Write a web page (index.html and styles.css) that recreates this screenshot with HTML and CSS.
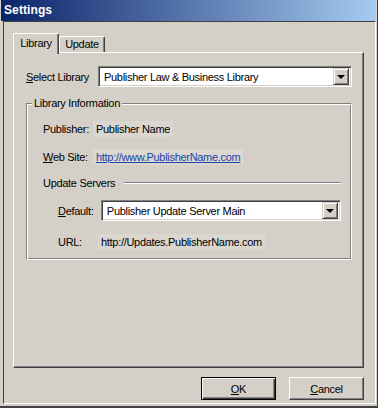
FILE: index.html
```html
<!DOCTYPE html>
<html lang="en">
<head>
  <meta charset="UTF-8" />
  <title>Settings</title>
  <link rel="stylesheet" href="styles.css">
</head>
<body>
  <div class="window">
    <div class="titlebar">Settings</div>
    <div class="client">
      <div class="tabs">
        <div class="tab active">Library</div>
        <div class="tab">Update</div>
      </div>

      <div class="panel">
        <div class="field-row">
          <label class="field-label"><u>S</u>elect Library</label>
          <div class="combo combo-wide">
            <span class="combo-text">Publisher Law &amp; Business Library</span>
            <span class="combo-btn"><span class="arrow"></span></span>
          </div>
        </div>

        <div class="group">
          <div class="legend">Library Information</div>

          <div class="info-row row-publisher">
            <span class="info-label">Publisher:</span>
            <span class="info-value">Publisher Name</span>
          </div>

          <div class="info-row row-web">
            <span class="info-label"><u>W</u>eb Site:</span>
            <span class="info-value"><a href="#">http://www.PublisherName.com</a></span>
          </div>

          <div class="info-row row-servers">
            <span>Update Servers</span>
            <span class="separator"></span>
          </div>

          <div class="info-row sub row-default">
            <span class="sub-label"><u>D</u>efault:</span>
            <div class="combo combo-server">
              <span class="combo-text">Publisher Update Server Main</span>
              <span class="combo-btn"><span class="arrow"></span></span>
            </div>
          </div>

          <div class="info-row sub row-url">
            <span class="sub-label">URL:</span>
            <span class="info-value">http://Updates.PublisherName.com</span>
          </div>
        </div>
      </div>

      <div class="buttons">
        <button class="btn default"><u>O</u>K</button>
        <button class="btn"><u>C</u>ancel</button>
      </div>
    </div>
  </div>
</body>
</html>
```

FILE: styles.css
```css
/* Classic Windows settings dialog */
* {
  box-sizing: border-box;
}

body {
  margin: 0;
  width: 378px;
  height: 408px;
  overflow: hidden;
  background: #d4d0c8;
  font-family: "Liberation Sans", Arial, sans-serif;
  font-size: 11px;
  letter-spacing: -0.3px;
  color: #000;
}

.window {
  display: flex;
  flex-direction: column;
  width: 378px;
  height: 408px;
  padding: 0 1px 2px 1px;
  border-right: 1px solid #404040;
  border-bottom: 2px solid #404040;
}

.titlebar {
  height: 21px;
  line-height: 20px;
  padding-left: 3px;
  background: linear-gradient(to right, #0a246a, #a6caf0);
  color: #fff;
  font-weight: bold;
  font-size: 12px;
  letter-spacing: 0.1px;
}

.client {
  flex: 1;
  display: flex;
  flex-direction: column;
  margin-left: 2px;
  border: 1px solid;
  border-color: #404040 #fff #fff #404040;
  padding: 11px 11px 3px 9px;
}

/* tabs */
.tabs {
  display: flex;
  align-items: flex-end;
  height: 19px;
  position: relative;
  z-index: 1;
}

.tab {
  width: 46px;
  height: 16px;
  line-height: 15px;
  text-align: center;
  border: 1px solid;
  border-color: #fff #404040 transparent #fff;
  border-bottom: none;
  border-radius: 2px 2px 0 0;
  box-shadow: inset -1px 0 #808080;
  background: #d4d0c8;
}

.tab.active {
  height: 21px;
  line-height: 19px;
  margin-bottom: -2px;
}

/* tab page */
.panel {
  height: 316px;
  border: 1px solid;
  border-color: #fff #404040 #404040 #fff;
  box-shadow: inset -1px -1px #808080;
  padding: 13px 0 0 12px;
}

.field-row {
  display: flex;
  align-items: center;
}

.field-label {
  width: 72px;
}

u {
  text-decoration: underline;
  text-underline-offset: 1px;
}

/* combo boxes */
.combo {
  display: flex;
  align-items: center;
  height: 21px;
  background: #fff;
  border: 1px solid;
  border-color: #808080 #fff #fff #808080;
  box-shadow: inset 1px 1px #404040, inset -1px -1px #d4d0c8;
  padding: 2px 2px 2px 5px;
}

.combo-wide {
  width: 254px;
}

.combo-server {
  width: 241px;
}

.combo-text {
  flex: 1;
  white-space: nowrap;
}

.combo-btn {
  display: flex;
  align-items: center;
  justify-content: center;
  width: 16px;
  height: 17px;
  background: #d4d0c8;
  border: 1px solid;
  border-color: #d4d0c8 #404040 #404040 #d4d0c8;
  box-shadow: inset 1px 1px #fff, inset -1px -1px #808080;
}

.arrow {
  width: 0;
  height: 0;
  border-left: 4px solid transparent;
  border-right: 4px solid transparent;
  border-top: 4px solid #000;
  margin-top: 1px;
}

/* group box */
.group {
  width: 326px;
  height: 157px;
  margin-top: 16px;
  border: 1px solid;
  border-color: #808080 #fff #fff #808080;
  box-shadow: inset 1px 1px #fff, inset -1px -1px #808080;
  padding: 0 10px 0 16px;
}

.legend {
  display: table;
  margin: -7px 0 0 -11px;
  padding: 0 2px;
  line-height: 13px;
  background: #d4d0c8;
}

.info-row {
  display: flex;
  align-items: center;
  height: 20px;
}

.row-publisher {
  margin-top: 9px;
}

.row-web {
  margin-top: 8px;
}

.row-servers {
  margin-top: 6px;
}

.row-default {
  height: 21px;
  margin-top: 7px;
}

.row-url {
  margin-top: 11px;
}

.info-label {
  width: 53px;
}

.info-row.sub {
  padding-left: 15px;
}

.sub-label {
  width: 43px;
}

.info-value {
  background: #dad7d0;
  padding: 2px 3px;
  margin-left: -3px;
}

.info-value a {
  color: #1d44a8;
}

.separator {
  flex: 1;
  height: 2px;
  margin: 0 0 0 9px;
  border-top: 1px solid #808080;
  border-bottom: 1px solid #fff;
}

/* dialog buttons */
.buttons {
  display: flex;
  justify-content: flex-end;
  gap: 13px;
  margin-top: 9px;
}

.btn {
  width: 75px;
  height: 23px;
  padding: 0;
  font-family: inherit;
  font-size: 11px;
  letter-spacing: -0.3px;
  color: #000;
  background: #d4d0c8;
  border: 1px solid;
  border-color: #fff #404040 #404040 #fff;
  box-shadow: inset -1px -1px #808080;
}

.btn.default {
  border: 1px solid #000;
  box-shadow: inset 1px 1px #fff, inset -1px -1px #404040, inset -2px -2px #808080;
}
```
